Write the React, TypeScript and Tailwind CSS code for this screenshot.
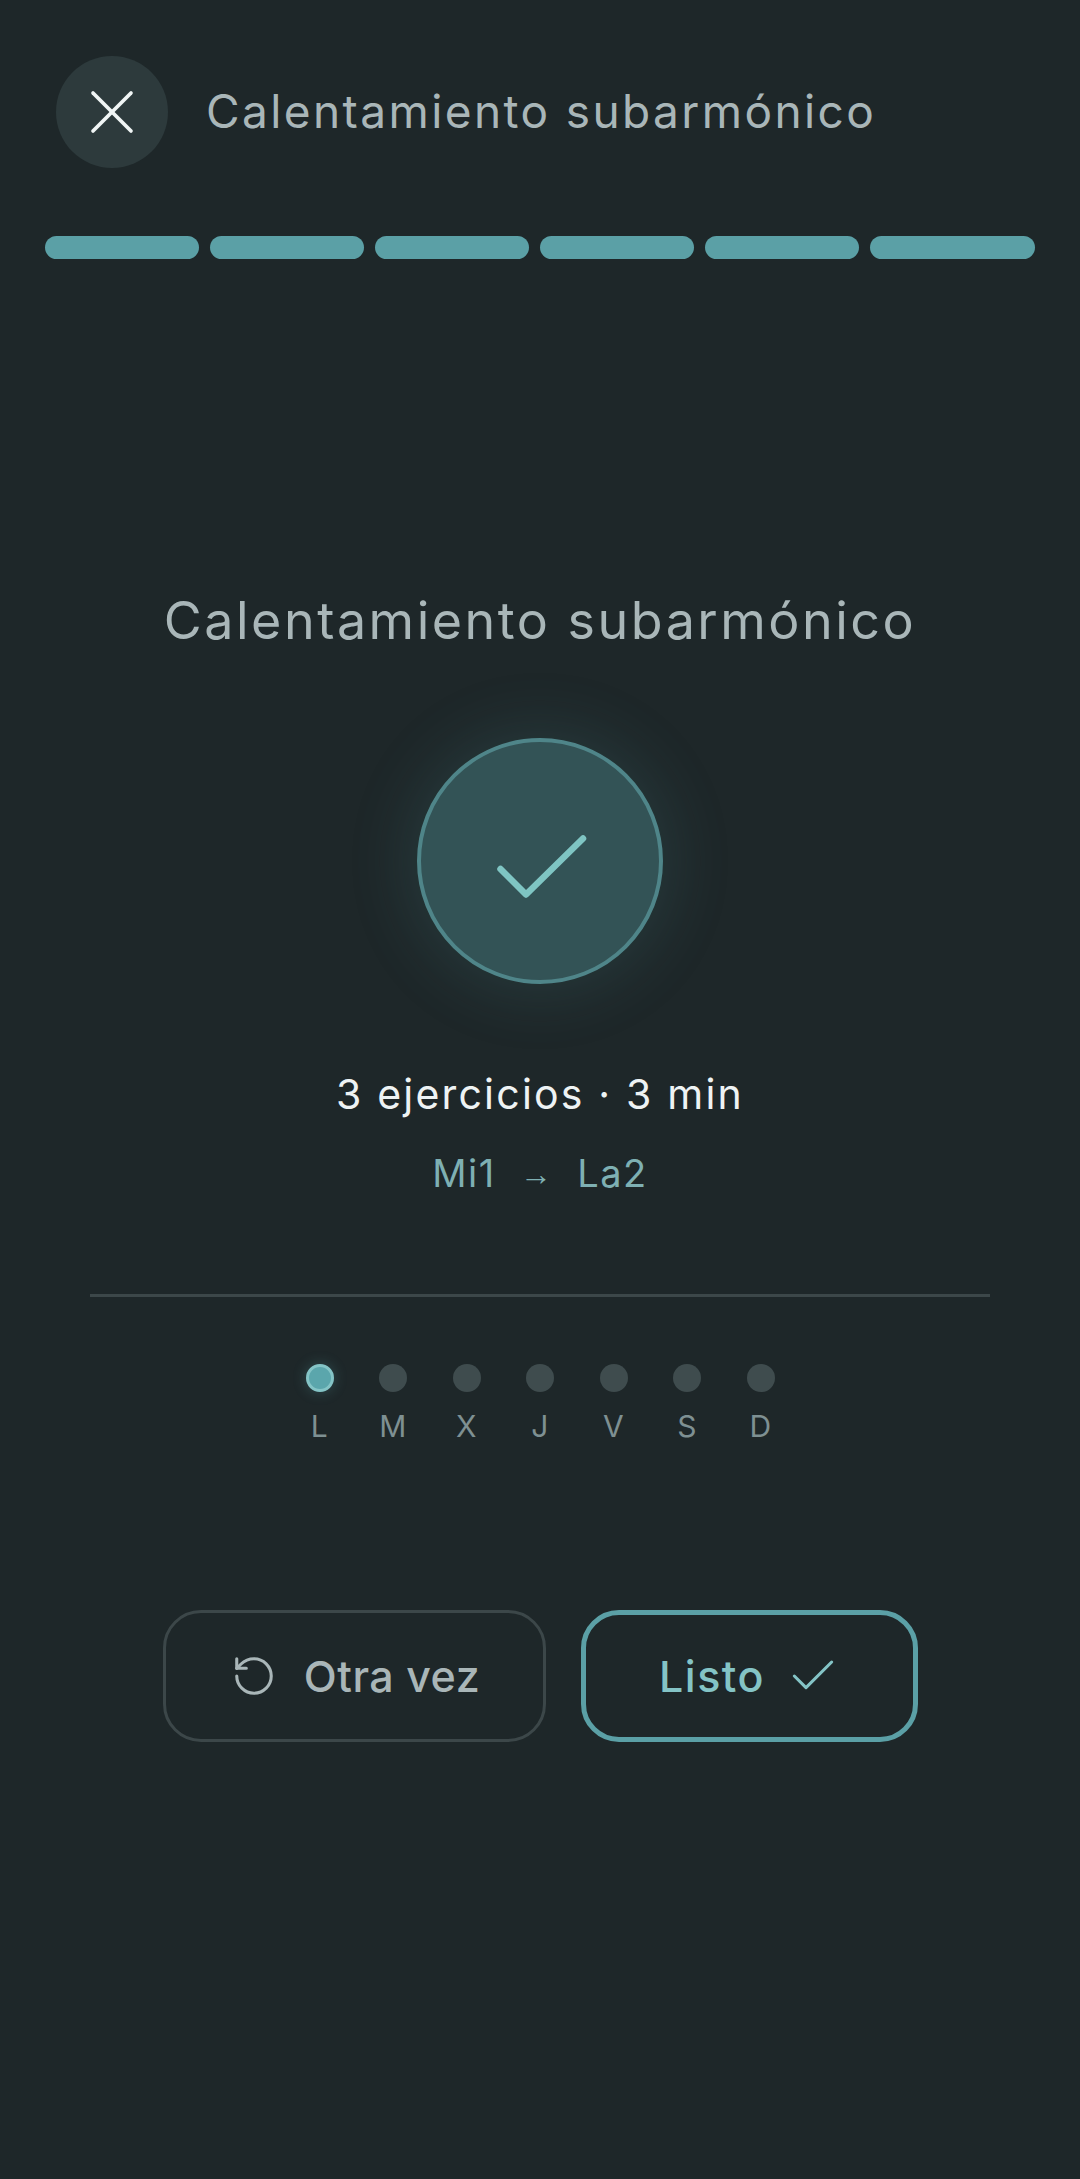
import { Check, RotateCcw, X } from 'lucide-react'

const days = ['L', 'M', 'X', 'J', 'V', 'S', 'D']
const font = "font-['Inter',sans-serif]"

export default function App() {
  return (
    <main className={`flex min-h-[2179px] w-full flex-col bg-[#1e2729] ${font}`}>
      <header className="flex items-center gap-[38px] px-[56px] pt-[56px]">
        <button className="flex h-[112px] w-[112px] items-center justify-center rounded-full bg-[#2d3a3c]">
          <X size={76} strokeWidth={1.15} className="text-[#f0f5f5]" />
        </button>
        <h2 className="mb-[2px] text-[46px] leading-[56px] tracking-[2.4px] text-[#a9b6b8]">
          Calentamiento subarmónico
        </h2>
      </header>

      <div className="mt-[68px] flex gap-[11px] pl-[45px]">
        {[0, 1, 2, 3, 4].map((i) => (
          <div key={i} className="h-[23px] w-[154px] rounded-full bg-[#5ba0a6]" />
        ))}
        <div className="h-[23px] w-[165px] rounded-full bg-[#5ba0a6]" />
      </div>

      <section className="mt-[331px] flex flex-col items-center">
        <h1 className="text-[52px] leading-[62px] tracking-[2.5px] text-[#a9b6b8]">
          Calentamiento subarmónico
        </h1>

        <div className="mt-[86px] flex h-[246px] w-[246px] items-center justify-center rounded-full border-4 border-[#4f8589] bg-[#335356] shadow-[0_0_60px_10px_rgba(80,140,145,0.18)]">
          <svg width="90" height="63" viewBox="0 0 90 63" fill="none" className="mt-[11px] ml-[3px]">
            <path d="M3.5 34 L29 59.5 L86 3.5" stroke="#7fc5c3" strokeWidth="6.5" strokeLinecap="round" strokeLinejoin="round" />
          </svg>
        </div>

        <p className="mt-[85px] text-[41px] leading-[50px] tracking-[2.2px] text-[#eef3f4]">
          3 ejercicios · 3 min
        </p>
        <p className="mt-[30px] flex items-center text-[38px] leading-[46px] tracking-[1.5px] text-[#7eb0b3]">
          <span>Mi1</span>
          <span className="mx-[24px] pt-[2px] font-['Liberation_Sans',sans-serif] text-[32px]">→</span>
          <span>La2</span>
        </p>

        <div className="mt-[97px] h-[3px] w-[900px] bg-[#3c4749]" />

        <div className="mt-[67px] flex gap-[45.5px]">
          {days.map((d, i) => (
            <div key={d} className="flex w-[28px] flex-col items-center">
              <div
                className={
                  i === 0
                    ? 'h-[28px] w-[28px] rounded-full border-[3px] border-[#84c4c6] bg-[#5ba6ac] shadow-[0_0_14px_rgba(91,166,172,0.3)]'
                    : 'h-[28px] w-[28px] rounded-full bg-[#3f4c4e]'
                }
              />
              <span className="mt-[16px] text-[30px] leading-[36px] tracking-[0.5px] text-[#7e9092]">{d}</span>
            </div>
          ))}
        </div>

        <div className="mt-[166px] flex gap-[35px]">
          <button className="flex h-[132px] w-[383px] items-center justify-center gap-[27px] rounded-[38px] border-[3px] border-[#3c4749] pl-[3px] text-[#a9b6b8]">
            <RotateCcw size={46} strokeWidth={1.6} />
            <span className="text-[43px] font-medium leading-none tracking-[0.5px]">Otra vez</span>
          </button>
          <button className="flex h-[132px] w-[337px] items-center justify-center gap-[20px] rounded-[38px] border-[5px] border-[#5ba0a6] pl-[2px] text-[#84c4c6]">
            <span className="text-[43px] font-medium leading-none tracking-[1.5px]">Listo</span>
            <Check size={56} strokeWidth={1.3} />
          </button>
        </div>
      </section>
    </main>
  )
}
